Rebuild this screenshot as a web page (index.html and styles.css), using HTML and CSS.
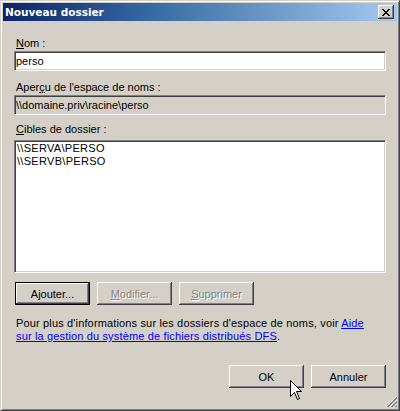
FILE: index.html
```html
<!DOCTYPE html>
<html lang="fr">
<head>
<meta charset="utf-8">
<title>Nouveau dossier</title>
<link rel="stylesheet" href="styles.css">
</head>
<body>
<div class="window">
  <div class="titlebar">
    <span class="title">Nouveau dossier</span>
    <span class="close">
      <svg width="8" height="7" viewBox="0 0 8 7" shape-rendering="crispEdges">
        <path d="M0 0h2v1h-2zM6 0h2v1h-2zM1 1h2v1h-2zM5 1h2v1h-2zM2 2h4v1h-4zM3 3h2v1h-2zM2 4h4v1h-4zM1 5h2v1h-2zM5 5h2v1h-2zM0 6h2v1h-2zM6 6h2v1h-2z" fill="#000"/>
      </svg>
    </span>
  </div>
  <div class="content">
    <div class="label first"><u>N</u>om :</div>
    <div class="field input">perso</div>
    <div class="label second">Aper<u>ç</u>u de l'espace de noms :</div>
    <div class="field readonly">\\domaine.priv\racine\perso</div>
    <div class="label third"><u>C</u>ibles de dossier :</div>
    <div class="field list">
      <div class="item">\\SERVA\PERSO</div>
      <div class="item">\\SERVB\PERSO</div>
    </div>
    <div class="btnrow">
      <button class="btn default">A<u>j</u>outer...</button>
      <button class="btn disabled"><u>M</u>odifier...</button>
      <button class="btn disabled"><u>S</u>upprimer</button>
    </div>
    <p class="info">Pour plus d'informations sur les dossiers d'espace de noms, voir <a href="#">Aide<br>sur la gestion du système de fichiers distribués DFS</a>.</p>
    <div class="footer">
      <button class="btn">OK</button>
      <button class="btn">Annuler</button>
    </div>
  </div>
  <svg class="grip" width="12" height="12" viewBox="0 0 12 12" shape-rendering="crispEdges">
    <g stroke-width="1">
      <line x1="11.5" y1="0.5" x2="0.5" y2="11.5" stroke="#fff"/>
      <line x1="11.5" y1="1.5" x2="1.5" y2="11.5" stroke="#808080"/>
      <line x1="11.5" y1="2.5" x2="2.5" y2="11.5" stroke="#808080"/>
      <line x1="11.5" y1="4.5" x2="4.5" y2="11.5" stroke="#fff"/>
      <line x1="11.5" y1="5.5" x2="5.5" y2="11.5" stroke="#808080"/>
      <line x1="11.5" y1="6.5" x2="6.5" y2="11.5" stroke="#808080"/>
      <line x1="11.5" y1="8.5" x2="8.5" y2="11.5" stroke="#fff"/>
      <line x1="11.5" y1="9.5" x2="9.5" y2="11.5" stroke="#808080"/>
      <line x1="11.5" y1="10.5" x2="10.5" y2="11.5" stroke="#808080"/>
    </g>
  </svg>
  <svg class="cursor" width="13" height="21" viewBox="0 0 13 21">
    <path d="M0.5 0.5 L0.5 16.5 L4.5 12.5 L7.5 19.5 L9.5 18.5 L6.5 11.5 L11.5 11.5 Z" fill="#fff" stroke="#000" stroke-width="1" stroke-linejoin="miter"/>
  </svg>
</div>
</body>
</html>
```
FILE: styles.css
```css
html, body {
  margin: 0;
  padding: 0;
  background: #D4D0C8;
}

.window {
  position: relative;
  width: 400px;
  height: 411px;
  box-sizing: border-box;
  background: #D4D0C8;
  border: 1px solid;
  border-color: #D4D0C8 #404040 #404040 #D4D0C8;
  box-shadow: inset 1px 1px #FFFFFF, inset -1px -1px #808080;
  padding: 2px;
  font-family: "Liberation Sans", Arial, sans-serif;
  font-size: 11px;
  color: #000;
}

.titlebar {
  height: 18px;
  display: flex;
  align-items: center;
  justify-content: space-between;
  background: linear-gradient(to right, #0A246A 0%, #3A6EA5 40%, #A6CAF0 100%);
  padding: 0 3px 0 2px;
}

.title {
  color: #FFFFFF;
  font-family: "DejaVu Sans", Verdana, sans-serif;
  font-weight: bold;
  font-size: 10.5px;
  line-height: 18px;
}

.close {
  width: 16px;
  height: 14px;
  box-sizing: border-box;
  background: #D4D0C8;
  box-shadow: inset -1px -1px #404040, inset 1px 1px #FFFFFF, inset -2px -2px #808080, inset 2px 2px #D4D0C8;
  display: flex;
  align-items: center;
  justify-content: center;
  padding-right: 1px;
}

.close svg {
  display: block;
}

.content {
  padding: 16px 11px 0 11px;
}

.label {
  line-height: 13px;
  padding-left: 2px;
  margin-bottom: 1px;
}

.label.second {
  margin-top: 10px;
}

.label.third {
  margin-top: 8px;
  margin-bottom: 4px;
}

.field {
  box-sizing: border-box;
  border: 1px solid;
  border-color: #808080 #FFFFFF #FFFFFF #808080;
  box-shadow: inset 1px 1px #404040, inset -1px -1px #D4D0C8;
}

.input,
.readonly {
  height: 20px;
  line-height: 18px;
  padding-left: 1px;
  white-space: nowrap;
}

.input {
  background: #FFFFFF;
}

.readonly {
  background: #D4D0C8;
}

.list {
  height: 133px;
  background: #FFFFFF;
  padding: 1px 0 0 2px;
}

.item {
  line-height: 13px;
  letter-spacing: 0.3px;
}

.btnrow {
  display: flex;
  gap: 7px;
  margin-top: 9px;
  padding-left: 1px;
}

.btn {
  width: 75px;
  height: 23px;
  box-sizing: border-box;
  margin: 0;
  padding: 0;
  border: none;
  background: #D4D0C8;
  font-family: "Liberation Sans", Arial, sans-serif;
  font-size: 11px;
  color: #000;
  box-shadow: inset -1px -1px #404040, inset 1px 1px #FFFFFF, inset -2px -2px #808080, inset 2px 2px #D4D0C8;
}

.btn.default {
  border: 1px solid #000;
}

.btn.disabled {
  color: #808080;
  text-shadow: 1px 1px #FFFFFF;
}

.info {
  margin: 12px 0 0 0;
  padding-left: 2px;
  line-height: 13px;
  letter-spacing: 0.15px;
}

.info a {
  color: #0000FF;
  text-decoration: underline;
}

.footer {
  display: flex;
  justify-content: flex-end;
  gap: 7px;
  margin-top: 22px;
}

.grip {
  position: absolute;
  right: 2px;
  bottom: 2px;
  display: block;
}

.cursor {
  position: absolute;
  left: 289px;
  top: 379px;
  display: block;
}
```
